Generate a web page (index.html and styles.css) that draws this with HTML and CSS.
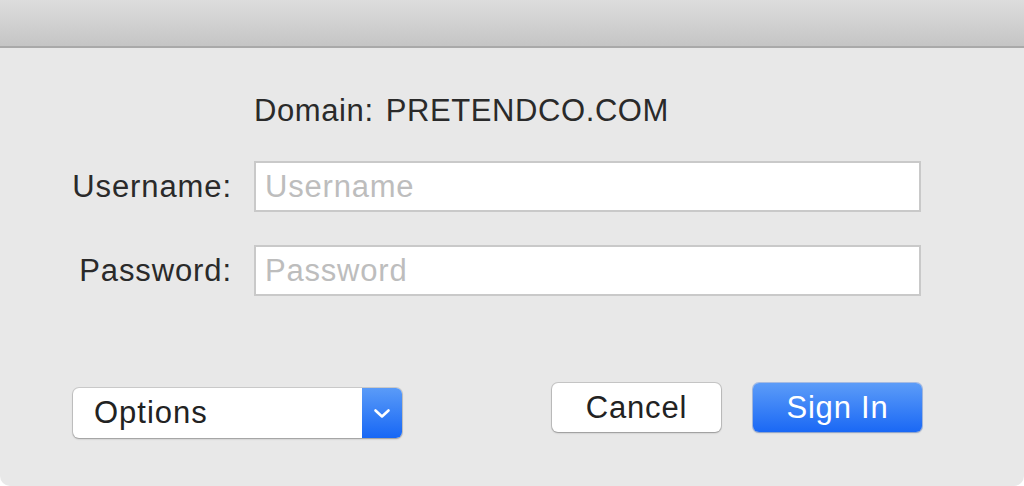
FILE: index.html
```html
<!DOCTYPE html>
<html>
<head>
<meta charset="utf-8">
<link rel="stylesheet" href="styles.css">
</head>
<body>
<div class="window">
  <div class="titlebar"></div>
  <div class="content">
    <div class="form">
      <div class="domain">Domain:<span class="domain-name">PRETENDCO.COM</span></div>
      <label class="label">Username:</label>
      <div class="field"><span class="placeholder">Username</span></div>
      <label class="label">Password:</label>
      <div class="field"><span class="placeholder">Password</span></div>
    </div>
    <div class="actions">
      <div class="popup">
        <span class="popup-text">Options</span>
        <span class="popup-arrow">
          <svg width="18" height="11" viewBox="0 0 18 11"><path d="M2.5 2.5 L9 8.5 L15.5 2.5" fill="none" stroke="#fff" stroke-width="2.6" stroke-linecap="round" stroke-linejoin="round"/></svg>
        </span>
      </div>
      <div class="buttons">
        <div class="btn btn-cancel">Cancel</div>
        <div class="btn btn-primary">Sign In</div>
      </div>
    </div>
  </div>
</div>
</body>
</html>
```
FILE: styles.css
```css
html, body {
  margin: 0;
  padding: 0;
  background: #ffffff;
}
body {
  font-family: "Liberation Sans", Arial, sans-serif;
  color: #262626;
}
.window {
  width: 1024px;
  height: 486px;
  background: #e8e8e8;
  border-radius: 0 0 10px 10px;
  overflow: hidden;
  display: flex;
  flex-direction: column;
}
.titlebar {
  height: 46px;
  background: linear-gradient(#dddddd, #c5c5c5);
  border-bottom: 2px solid #a9a9a9;
  flex: none;
}
.content {
  flex: 1;
  display: flex;
  flex-direction: column;
}
.form {
  display: grid;
  grid-template-columns: 232px 667px;
  column-gap: 22px;
  row-gap: 33px;
  align-items: center;
  padding-top: 46px;
}
.domain {
  grid-column: 2;
  font-size: 31px;
  letter-spacing: 0.6px;
  line-height: 34px;
  color: #2a2a2a;
}
.domain-name {
  margin-left: 12px;
}
.label {
  justify-self: end;
  font-size: 31px;
  letter-spacing: 0.9px;
  color: #2a2a2a;
}
.field {
  height: 47px;
  background: #ffffff;
  border: 2px solid #c9c9c9;
  display: flex;
  align-items: center;
  padding-left: 9px;
}
.placeholder {
  font-size: 31px;
  letter-spacing: 0.8px;
  color: #bdbdbd;
}
.actions {
  display: flex;
  justify-content: space-between;
  align-items: center;
  padding: 0 102px 0 73px;
  margin-top: 81px;
}
.popup {
  width: 329px;
  height: 50px;
  background: #ffffff;
  border-radius: 6px;
  box-shadow: 0 0 0 1px rgba(0,0,0,0.12), 0 1px 2px rgba(0,0,0,0.25);
  display: flex;
  overflow: hidden;
  margin-top: 11px;
}
.popup-text {
  flex: 1;
  display: flex;
  align-items: center;
  padding-left: 21px;
  font-size: 31px;
  letter-spacing: 1px;
  color: #222;
}
.popup-arrow {
  width: 40px;
  background: linear-gradient(#5a9bf8, #1767f5);
  display: flex;
  align-items: center;
  justify-content: center;
}
.buttons {
  display: flex;
  gap: 32px;
}
.btn {
  width: 169px;
  height: 49px;
  border-radius: 6px;
  display: flex;
  align-items: center;
  justify-content: center;
  font-size: 31px;
  letter-spacing: 0.8px;
}
.btn-cancel {
  background: #ffffff;
  color: #222;
  box-shadow: 0 0 0 1px rgba(0,0,0,0.14), 0 1px 2px rgba(0,0,0,0.25);
}
.btn-primary {
  background: linear-gradient(#5c9cf8, #1a68f5);
  color: #ffffff;
  box-shadow: 0 0 0 1px rgba(20,90,220,0.3), 0 1px 2px rgba(0,0,0,0.2);
}
```
